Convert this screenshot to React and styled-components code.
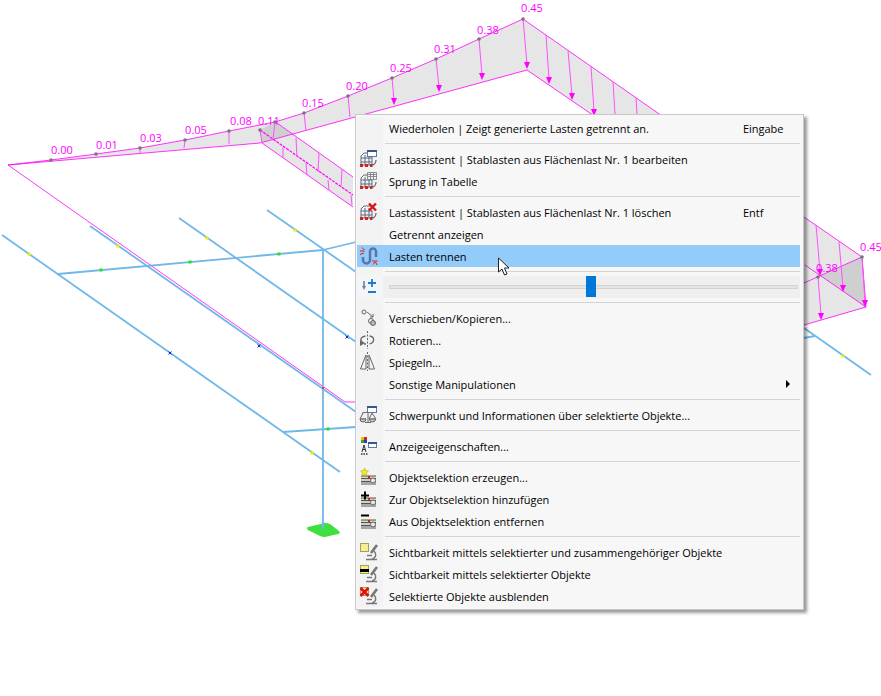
import styled, { createGlobalStyle } from "styled-components";

const GlobalStyle = createGlobalStyle`
  html, body {
    margin: 0;
    padding: 0;
    background: #fff;
  }
`;

const Page = styled.div`
  position: relative;
  width: 881px;
  height: 696px;
  overflow: hidden;
  background: #fff;
`;

const Model = styled.svg`
  position: absolute;
  left: 0;
  top: 0;
`;

const Menu = styled.div`
  position: absolute;
  left: 355px;
  top: 114px;
  width: 449px;
  box-sizing: border-box;
  padding: 2px 3px 2px 1px;
  background: #f7f7f7;
  border: 1px solid #c8c8c8;
  box-shadow: 3px 3px 3px rgba(0, 0, 0, 0.4);
  font-family: "Open Sans", "Noto Sans", sans-serif;
  font-size: 11px;
  letter-spacing: -0.02px;
  color: #000;
`;

const Row = styled.div`
  display: flex;
  align-items: center;
  height: 22px;
  background: ${(p) => (p.$active ? "#93cbf9" : p.$slider ? "#efefef" : "transparent")};
`;

const Gutter = styled.div`
  flex: none;
  box-sizing: border-box;
  width: 26px;
  height: 100%;
  display: flex;
  align-items: center;
  padding-left: 2px;
  background: ${(p) => (p.$active ? "#93cbf9" : p.$slider ? "#f3f5f8" : "#f3f3f3")};
`;

const Label = styled.span`
  flex: 1;
  padding-left: 6px;
  white-space: nowrap;
`;

const Shortcut = styled.span`
  width: 57px;
  white-space: nowrap;
`;

const Arrow = styled.span`
  width: 0;
  height: 0;
  margin-right: 10px;
  border-left: 4px solid #000;
  border-top: 4px solid transparent;
  border-bottom: 4px solid transparent;
`;

const Separator = styled.div`
  display: flex;
  height: 9px;
  align-items: center;
`;

const SeparatorGutter = styled.div`
  width: 26px;
  height: 100%;
  background: #f3f3f3;
`;

const SeparatorLine = styled.div`
  flex: 1;
  height: 1px;
  margin-left: 2px;
  background: #d4d4d4;
`;

const SliderTrack = styled.div`
  position: relative;
  flex: 1;
  height: 2px;
  margin: 0 2px 0 6px;
  background: #e4e6e4;
  border: 1px solid #d2d4d2;
`;

const SliderThumb = styled.div`
  position: absolute;
  left: 196px;
  top: -10px;
  width: 10px;
  height: 21px;
  background: #0078d7;
`;

const Cursor = styled.svg`
  position: absolute;
  left: 497px;
  top: 257px;
`;

const values = [
  ["0.00", 62, 154],
  ["0.01", 107, 149],
  ["0.03", 151, 142],
  ["0.05", 196, 134],
  ["0.08", 241, 125],
  ["0.11", 269, 125],
  ["0.15", 313, 107],
  ["0.20", 357, 90],
  ["0.25", 401, 72],
  ["0.31", 445, 53],
  ["0.38", 488, 34],
  ["0.45", 532, 12],
  ["0.38", 827, 272],
  ["0.45", 871, 251],
];

const nodes = [
  [51, 160], [96, 154], [140, 148], [185, 140], [229, 131], [260, 130], [275, 122], [304, 113],
  [348, 96], [392, 78], [436, 59], [479, 39], [523, 19], [818, 277], [862, 257],
];

const hangers = [
  [140, 148, 140, 153], [185, 140, 184, 148], [229, 131, 229, 144], [260, 130, 262, 143],
  [275, 122, 273, 139], [304, 113, 306, 131], [348, 96, 350, 117],
  [296, 138, 297, 157], [319, 153, 318, 172], [342, 169, 341, 187],
  [283, 147, 283, 158], [306, 163, 307, 175], [328, 180, 329, 190], [351, 195, 352, 205],
  [613, 82, 616, 130], [636, 98, 638, 130],
];

const arrows = [
  [392, 78, 394, 105], [436, 59, 439, 92], [479, 39, 482, 80], [523, 19, 527, 69], [546, 35, 549, 84],
  [568, 51, 572, 100], [591, 66, 594, 116],
  [816, 225, 820, 276], [839, 242, 843, 292], [818, 277, 821, 320], [862, 257, 865, 307],
];

const beams = [
  [2, 235, 340, 472], [90, 226, 356, 412], [179, 218, 356, 342], [267, 210, 356, 272],
  [804, 328, 871, 375], [804, 338, 815, 336], [58, 274, 323, 250], [323, 250, 356, 242],
  [283, 432, 356, 427], [323, 250, 323, 528],
];

const dots = [
  [29, 254, "#e8f000"], [118, 246, "#e8f000"], [207, 238, "#e8f000"], [295, 230, "#e8f000"],
  [101, 270, "#22e022"], [190, 262, "#22e022"], [279, 254, "#22e022"], [328, 429, "#22e022"],
  [312, 453, "#e8f000"], [843, 356, "#e8f000"],
];

const crosses = [[170, 353], [259, 346], [347, 337]];

function ModelView() {
  return (
    <Model width="881" height="696" viewBox="0 0 881 696">
      <g fill="#e6e6e6" stroke="none">
        <polygon points="51,160 96,154 140,148 185,140 229,131 275,122 304,113 348,96 392,78 436,59 479,39 523,19 665,118 597,118 527,70 260,143 8,165" />
        <polygon points="260,130 277,123 353,177 353,207 262,143" />
        <polygon points="804,217 862,257 866,307 804,325" />
      </g>
      <polygon points="260,130 275,122 292,134 273,139 262,143" fill="#cfcfcf" />
      <polygon points="821,276 862,257 866,307" fill="#cfcfcf" />
      <g fill="none" stroke="#ff00ff" strokeWidth="0.8">
        <polyline points="356,402 345,402 8,165 260,143 527,70 600,120" />
        <polyline points="8,165 51,160 96,154 140,148 185,140 229,131 275,122 304,113 348,96 392,78 436,59 479,39 523,19 665,118" />
        <polyline points="277,123 353,177" />
        <polyline points="262,143 353,207" />
        <polyline points="260,130 353,195" strokeWidth="1.2" strokeDasharray="3 1" />
        <polyline points="804,217 862,257 866,307 804,325" />
        <polyline points="804,283 862,257" />
        <polyline points="805,265 866,307" />
      </g>
      <g stroke="#ff50ff" strokeWidth="1">
        {hangers.map((h, i) => (
          <line key={i} x1={h[0]} y1={h[1]} x2={h[2]} y2={h[3]} />
        ))}
        {arrows.map((a, i) => (
          <line key={i} x1={a[0]} y1={a[1]} x2={a[2]} y2={a[3] - 5} />
        ))}
      </g>
      <g fill="#ff00ff">
        {arrows.map((a, i) => (
          <polygon key={i} points={`${a[2] - 3},${a[3] - 7} ${a[2] + 3},${a[3] - 7} ${a[2]},${a[3]}`} />
        ))}
      </g>
      <g stroke="#70b8e8" strokeWidth="1.8">
        {beams.map((b, i) => (
          <line key={i} x1={b[0]} y1={b[1]} x2={b[2]} y2={b[3]} />
        ))}
      </g>
      <path d="M308 527 L325 523 Q328 523 330 524 L339 531 Q341 533 338 534 L325 537 Q322 537 320 536 L308 530 Q306 528 308 527Z" fill="#3ee03e" />
      <line x1="323" y1="522" x2="323" y2="529" stroke="#70b8e8" strokeWidth="2.4" />
      {dots.map((d, i) => (
        <rect key={i} x={d[0] - 1.5} y={d[1] - 1.5} width="3" height="3" fill={d[2]} />
      ))}
      {crosses.map((c, i) => (
        <path key={i} d={`M${c[0] - 1.5} ${c[1] - 1.5}l3 3m0 -3l-3 3`} stroke="#2020e0" strokeWidth="1" />
      ))}
      <rect x="322" y="387" width="2" height="2" fill="#ff3030" />
      <g fill="#777">
        {nodes.map((n, i) => (
          <circle key={i} cx={n[0]} cy={n[1]} r="1.8" />
        ))}
      </g>
      <g fill="#ff00ff" fontFamily="'Open Sans', sans-serif" fontSize="11" textAnchor="middle">
        {values.map((v, i) => (
          <text key={i} x={v[1]} y={v[2]}>{v[0]}</text>
        ))}
      </g>
    </Model>
  );
}

const Icon = ({ children }) => (
  <svg width="20" height="20" viewBox="0 0 20 20" fill="none">
    {children}
  </svg>
);

const Sheet = ({ kind }) => (
  <Icon>
    <path d="M2 16V7l3-3h7M2 9h11M2 13h11M6 6v10M10 6v10M13 8v8" stroke="#5a6a80" strokeWidth="1" />
    <path d="M2 16h11" stroke="#5a6a80" strokeWidth="1" />
    <rect x="1" y="15" width="3" height="3" fill="#d42020" />
    <rect x="6" y="15" width="3" height="3" fill="#d42020" />
    <rect x="11" y="15" width="2.500" height="3" fill="#d42020" />
    <path d="M17 11c0 3-2 5-4 5" stroke="#666" strokeWidth="1.300" />
    {kind === "edit" && (
      <g>
        <rect x="8.500" y="1.500" width="9" height="6" fill="#fff" stroke="#5a7ba8" />
        <rect x="8" y="1" width="10" height="2" fill="#34588c" />
      </g>
    )}
    {kind === "table" && (
      <path d="M8.500 1.500h9v7h-9zM8.500 3.500h9M8.500 5.500h9M11.500 1.500v7M14.500 1.500v7" fill="#f0f0f0" stroke="#777" strokeWidth="0.800" />
    )}
    {kind === "delete" && <path d="M10 1.500l7 7m0 -7l-7 7" stroke="#e01010" strokeWidth="2.400" />}
  </Icon>
);

const UnlinkIcon = () => (
  <Icon>
    <path d="M4 11v3a3.500 3.500 0 0 0 7 0V5.500a3 3 0 0 1 6 0V11" stroke="#5877a8" strokeWidth="2.500" />
    <path d="M1 5h4.500M3 1.500l2.500 2.500M1 8.500l4-1.500" stroke="#e01a1a" strokeWidth="1" />
    <path d="M13 15h5.500M14 18.500l2-2.500M18 19l-1.500-3" stroke="#e01a1a" strokeWidth="1" />
  </Icon>
);

const SortIcon = () => (
  <Icon>
    <path d="M5 4v6" stroke="#6f8296" strokeWidth="1.600" />
    <path d="M3 9h4l-2 4z" fill="#6f8296" />
    <path d="M9 6h8M13 2v8M9 15h8" stroke="#1b7bd0" strokeWidth="1.800" />
  </Icon>
);

const MoveIcon = () => (
  <Icon>
    <circle cx="5" cy="4" r="2" stroke="#666" />
    <path d="M8 4l6 5M14 6v3h-3" stroke="#666" />
    <circle cx="12" cy="13" r="2.500" stroke="#666" />
    <circle cx="14" cy="15" r="2.500" fill="#b5b5b5" stroke="#666" />
  </Icon>
);

const RotateIcon = () => (
  <Icon>
    <path d="M8.500 1v18" stroke="#666" strokeDasharray="2 1.500" />
    <path d="M6.500 6C2 7 1 9 2.500 11M10.500 6c5 .5 6 6 0 8M7 14H5" stroke="#666" strokeWidth="1.300" />
    <path d="M1 10l5 3-5 3z" fill="#666" />
  </Icon>
);

const MirrorIcon = () => (
  <Icon>
    <path d="M8.500 0v19" stroke="#666" strokeDasharray="2 1.500" />
    <path d="M7 3L1.500 17H7zM10 3l5.500 14H10z" stroke="#666" />
  </Icon>
);

const ScaleIcon = () => (
  <Icon>
    <rect x="8.500" y="1.500" width="9" height="6" fill="#fff" stroke="#5a7ba8" />
    <rect x="8" y="1" width="10" height="2" fill="#34588c" />
    <path d="M3 8l6-1M9 7v10M6 17.500h6M4 8l-3 6h6M13 8l-3 6h7z" stroke="#666" />
    <path d="M1 14a3 3 0 0 0 6 0zM10.500 14a3 3 0 0 0 6 0z" fill="#c4c4c4" stroke="#666" />
  </Icon>
);

const DisplayIcon = () => (
  <Icon>
    <rect x="2" y="1" width="3" height="3" fill="#e8c010" />
    <rect x="5" y="1" width="3" height="3" fill="#d42020" />
    <rect x="2" y="4" width="3" height="3" fill="#30a830" />
    <rect x="5" y="4" width="3" height="3" fill="#2040c0" />
    <rect x="9.500" y="6.500" width="8" height="5" fill="#fff" stroke="#5a7ba8" />
    <rect x="9" y="6" width="9" height="2" fill="#34588c" />
    <path d="M3 16l2-7 2 7M3.500 13.500h3" stroke="#333" />
    <path d="M2 18h1.500M4.500 18H6M7 18h1.500" stroke="#333" strokeWidth="1.400" />
  </Icon>
);

const SelectionIcon = ({ kind }) => (
  <Icon>
    <path d="M2 9h15v2.500H2z" fill="#e8d9a0" />
    <path d="M2 9h15M2 11.500h15M2 14.500h15M2 17h15" stroke="#555" />
    <rect x="2" y="12" width="15" height="2" fill="#cfcfcf" />
    <rect x="2" y="15" width="15" height="2" fill="#a8a8a8" />
    <rect x="9" y="9" width="2" height="2" fill="#d42020" />
    <circle cx="14" cy="13.500" r="2.500" fill="#e8e8e8" stroke="#666" />
    {kind === "new" && (
      <path d="M5.500 1l1.200 2.600 2.800.3-2 2 .5 2.800-2.500-1.400-2.500 1.400.5-2.800-2-2 2.800-.3z" fill="#f4e820" stroke="#b0a010" strokeWidth="0.500" />
    )}
    {kind === "add" && <path d="M2 6.500h8M6 2.500v8" stroke="#000" strokeWidth="2" />}
    {kind === "remove" && <path d="M2 4.500h8" stroke="#000" strokeWidth="2" />}
  </Icon>
);

const ScopeIcon = ({ kind }) => (
  <Icon>
    <rect x="1.500" y="1.500" width="8" height="8" fill="#f6ee90" stroke="#a0a060" />
    {kind === "half" && <rect x="1" y="5" width="9" height="3" fill="#000" />}
    {kind === "hide" && <path d="M1.500 2l8 8m0 -8l-8 8" stroke="#e01010" strokeWidth="2.600" />}
    <path d="M18 3l-6 8" stroke="#777" strokeWidth="2.600" />
    <path d="M15 9c3 3 2 7-2 8M7 17.500h11M8 13.500h5" stroke="#777" strokeWidth="1.500" />
  </Icon>
);

const Item = ({ icon, label, shortcut, arrow, active }) => (
  <Row $active={active}>
    <Gutter $active={active}>{icon}</Gutter>
    <Label>{label}</Label>
    {shortcut && <Shortcut>{shortcut}</Shortcut>}
    {arrow && <Arrow />}
  </Row>
);

const Divider = () => (
  <Separator>
    <SeparatorGutter />
    <SeparatorLine />
  </Separator>
);

export default function App() {
  return (
    <Page>
      <GlobalStyle />
      <ModelView />
      <Menu>
        <Item label="Wiederholen | Zeigt generierte Lasten getrennt an." shortcut="Eingabe" />
        <Divider />
        <Item icon={<Sheet kind="edit" />} label="Lastassistent | Stablasten aus Flächenlast Nr. 1 bearbeiten" />
        <Item icon={<Sheet kind="table" />} label="Sprung in Tabelle" />
        <Divider />
        <Item icon={<Sheet kind="delete" />} label="Lastassistent | Stablasten aus Flächenlast Nr. 1 löschen" shortcut="Entf" />
        <Item label="Getrennt anzeigen" />
        <Item active icon={<UnlinkIcon />} label="Lasten trennen" />
        <Divider />
        <Row $slider>
          <Gutter $slider><SortIcon /></Gutter>
          <SliderTrack><SliderThumb /></SliderTrack>
        </Row>
        <Divider />
        <Item icon={<MoveIcon />} label="Verschieben/Kopieren..." />
        <Item icon={<RotateIcon />} label="Rotieren..." />
        <Item icon={<MirrorIcon />} label="Spiegeln..." />
        <Item label="Sonstige Manipulationen" arrow />
        <Divider />
        <Item icon={<ScaleIcon />} label="Schwerpunkt und Informationen über selektierte Objekte..." />
        <Divider />
        <Item icon={<DisplayIcon />} label="Anzeigeeigenschaften..." />
        <Divider />
        <Item icon={<SelectionIcon kind="new" />} label="Objektselektion erzeugen..." />
        <Item icon={<SelectionIcon kind="add" />} label="Zur Objektselektion hinzufügen" />
        <Item icon={<SelectionIcon kind="remove" />} label="Aus Objektselektion entfernen" />
        <Divider />
        <Item icon={<ScopeIcon />} label="Sichtbarkeit mittels selektierter und zusammengehöriger Objekte" />
        <Item icon={<ScopeIcon kind="half" />} label="Sichtbarkeit mittels selektierter Objekte" />
        <Item icon={<ScopeIcon kind="hide" />} label="Selektierte Objekte ausblenden" />
      </Menu>
      <Cursor width="16" height="20" viewBox="0 0 16 20">
        <path d="M1.500 1 L1.500 15 L5 12 L7.500 18 L10 17 L7.500 11 L12 11 Z" fill="#fff" stroke="#222" strokeWidth="1" />
      </Cursor>
    </Page>
  );
}
